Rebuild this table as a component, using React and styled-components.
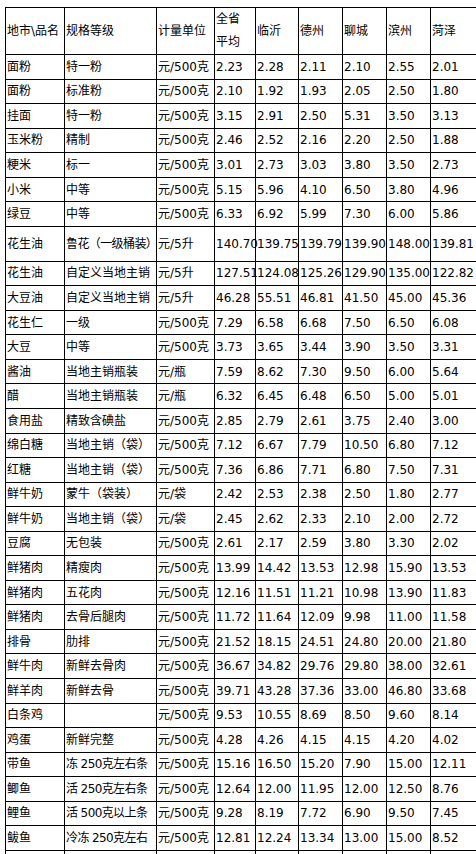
import React from "react";
import styled, { createGlobalStyle } from "styled-components";

const Global = createGlobalStyle`
  html, body {
    margin: 0;
    padding: 0;
    background: #ffffff;
    overflow: hidden;
  }
  body {
    font-family: "DejaVu Sans", "Noto Sans CJK SC", sans-serif;
    color: #000;
  }
`;

const Page = styled.div`
  padding: 7px 0 0 5px;
  width: 476px;
  height: 854px;
  box-sizing: border-box;
  overflow: hidden;
`;

const Table = styled.table`
  border-collapse: collapse;
  table-layout: fixed;
  width: 475px;
  font-family: "DejaVu Sans", "Noto Sans CJK SC", sans-serif;
  font-size: 12px;
  color: #000;
`;

const HeadCell = styled.th`
  border: 1px solid #000;
  padding: 0 0 0 1px;
  height: 46px;
  font-weight: normal;
  text-align: left;
  vertical-align: middle;
  line-height: 23px;
  white-space: nowrap;
  overflow: hidden;
`;

const HeadLine = styled.span`
  display: block;
`;

const Row = styled.tr`
  height: ${(p) => p.$h}px;
`;

const Cell = styled.td`
  border: 1px solid #000;
  padding: 0 0 0 1px;
  text-align: left;
  vertical-align: middle;
  white-space: nowrap;
  line-height: 14px;
  letter-spacing: ${(p) => (p.$tight ? "-0.6px" : "0")};
`;

const Col = styled.col`
  width: ${(p) => p.$w}px;
`;

const widths = [59, 92, 58, 41, 43, 44, 44, 44, 50];

const headers = [["地市\\品名"], ["规格等级"], ["计量单位"], ["全省", "平均"], ["临沂"], ["德州"], ["聊城"], ["滨州"], ["菏泽"]];

const rows = [
  ["面粉", "特一粉", "元/500克", "2.23", "2.28", "2.11", "2.10", "2.55", "2.01"],
  ["面粉", "标准粉", "元/500克", "2.10", "1.92", "1.93", "2.05", "2.50", "1.80"],
  ["挂面", "特一粉", "元/500克", "3.15", "2.91", "2.50", "5.31", "3.50", "3.13"],
  ["玉米粉", "精制", "元/500克", "2.46", "2.52", "2.16", "2.20", "2.50", "1.88"],
  ["粳米", "标一", "元/500克", "3.01", "2.73", "3.03", "3.80", "3.50", "2.73"],
  ["小米", "中等", "元/500克", "5.15", "5.96", "4.10", "6.50", "3.80", "4.96"],
  ["绿豆", "中等", "元/500克", "6.33", "6.92", "5.99", "7.30", "6.00", "5.86"],
  ["花生油", "鲁花（一级桶装）", "元/5升", "140.70", "139.75", "139.79", "139.90", "148.00", "139.81"],
  ["花生油", "自定义当地主销", "元/5升", "127.51", "124.08", "125.26", "129.90", "135.00", "122.82"],
  ["大豆油", "自定义当地主销", "元/5升", "46.28", "55.51", "46.81", "41.50", "45.00", "45.36"],
  ["花生仁", "一级", "元/500克", "7.29", "6.58", "6.68", "7.50", "6.50", "6.08"],
  ["大豆", "中等", "元/500克", "3.73", "3.65", "3.44", "3.90", "3.50", "3.31"],
  ["酱油", "当地主销瓶装", "元/瓶", "7.59", "8.62", "7.30", "9.50", "6.00", "5.64"],
  ["醋", "当地主销瓶装", "元/瓶", "6.32", "6.45", "6.48", "6.50", "5.00", "5.01"],
  ["食用盐", "精致含碘盐", "元/500克", "2.85", "2.79", "2.61", "3.75", "2.40", "3.00"],
  ["绵白糖", "当地主销（袋）", "元/500克", "7.12", "6.67", "7.79", "10.50", "6.80", "7.12"],
  ["红糖", "当地主销（袋）", "元/500克", "7.36", "6.86", "7.71", "6.80", "7.50", "7.31"],
  ["鲜牛奶", "蒙牛（袋装）", "元/袋", "2.42", "2.53", "2.38", "2.50", "1.80", "2.77"],
  ["鲜牛奶", "当地主销（袋）", "元/袋", "2.45", "2.62", "2.33", "2.10", "2.00", "2.72"],
  ["豆腐", "无包装", "元/500克", "2.61", "2.17", "2.59", "3.80", "3.30", "2.02"],
  ["鲜猪肉", "精瘦肉", "元/500克", "13.99", "14.42", "13.53", "12.98", "15.90", "13.53"],
  ["鲜猪肉", "五花肉", "元/500克", "12.16", "11.51", "11.21", "10.98", "13.90", "11.83"],
  ["鲜猪肉", "去骨后腿肉", "元/500克", "11.72", "11.64", "12.09", "9.98", "11.00", "11.58"],
  ["排骨", "肋排", "元/500克", "21.52", "18.15", "24.51", "24.80", "20.00", "21.80"],
  ["鲜牛肉", "新鲜去骨肉", "元/500克", "36.67", "34.82", "29.76", "29.80", "38.00", "32.61"],
  ["鲜羊肉", "新鲜去骨", "元/500克", "39.71", "43.28", "37.36", "33.00", "46.80", "33.68"],
  ["白条鸡", "", "元/500克", "9.53", "10.55", "8.69", "8.50", "9.60", "8.14"],
  ["鸡蛋", "新鲜完整", "元/500克", "4.28", "4.26", "4.15", "4.15", "4.20", "4.02"],
  ["带鱼", "冻 250克左右条", "元/500克", "15.16", "16.50", "15.20", "7.90", "15.00", "12.11"],
  ["鲫鱼", "活 250克左右条", "元/500克", "12.64", "12.00", "11.95", "12.00", "12.50", "8.76"],
  ["鲤鱼", "活 500克以上条", "元/500克", "9.28", "8.19", "7.72", "6.90", "9.50", "7.45"],
  ["鲅鱼", "冷冻 250克左右", "元/500克", "12.81", "12.24", "13.34", "13.00", "15.00", "8.52"],
  ["", "", "", "", "", "", "", "", ""],
];

export default function App() {
  return (
    <>
      <Global />
      <Page>
        <Table>
          <colgroup>
            {widths.map((w, i) => (
              <Col key={i} $w={w} />
            ))}
          </colgroup>
          <thead>
            <tr>
              {headers.map((h, i) => (
                <HeadCell key={i}>
                  {h.map((line, li) => (
                    <HeadLine key={li}>{line}</HeadLine>
                  ))}
                </HeadCell>
              ))}
            </tr>
          </thead>
          <tbody>
            {rows.map((r, ri) => (
              <Row key={ri} $h={ri === 7 ? 34.85 : 24.55}>
                {r.map((c, ci) => (
                  <Cell key={ci} $tight={c.length > 7 && ci === 1}>
                    {c}
                  </Cell>
                ))}
              </Row>
            ))}
          </tbody>
        </Table>
      </Page>
    </>
  );
}
